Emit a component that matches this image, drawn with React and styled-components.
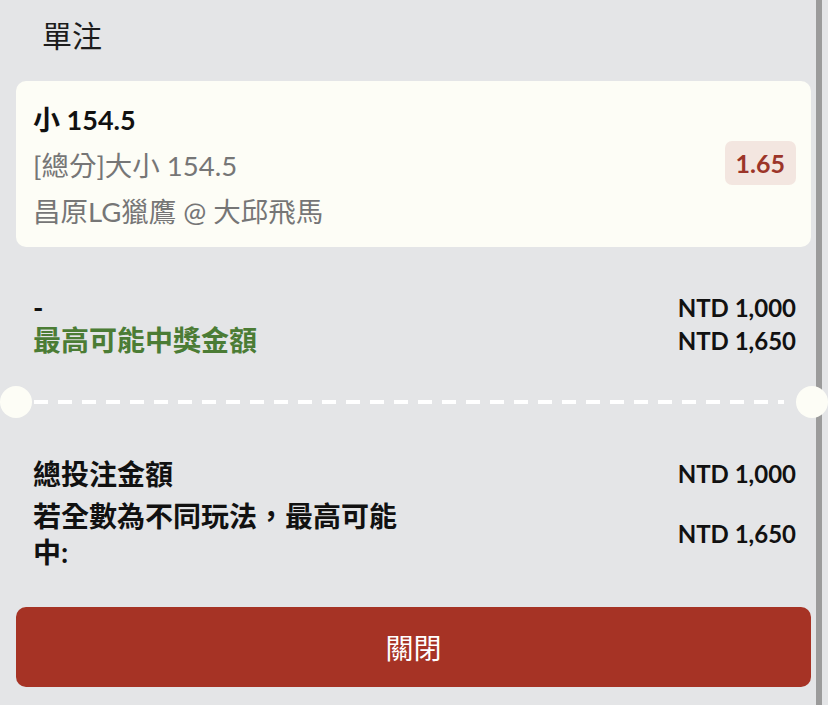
import React from 'react';
import styled, { createGlobalStyle } from 'styled-components';

const GlobalStyle = createGlobalStyle`
  html, body {
    margin: 0;
    padding: 0;
    background: #e4e5e7;
  }
  body {
    font-family: Lato, "Noto Sans CJK TC", "Noto Sans", sans-serif;
    color: #111;
  }
`;

const Page = styled.div`
  display: flex;
  width: 828px;
  height: 705px;
  overflow: hidden;
  background: #e4e5e7;
`;

const Main = styled.div`
  flex: 1;
  display: flex;
  flex-direction: column;
  padding: 0 5px 0 16px;
  position: relative;
`;

const Scrollbar = styled.div`
  width: 6px;
  margin-right: 6px;
  background: #9b9b9b;
`;

const Header = styled.h1`
  margin: 14px 0 0 26px;
  font-size: 30px;
  line-height: 42px;
  font-weight: 400;
  color: #1c1c1c;
`;

const BetCard = styled.div`
  margin-top: 25px;
  background: #fdfdf6;
  border-radius: 10px;
  padding: 16px 15px 12px 17px;
  display: flex;
  align-items: center;
  justify-content: space-between;
`;

const BetInfo = styled.div`
  display: flex;
  flex-direction: column;
`;

const BetLine = styled.div`
  font-size: ${p => (p.$strong ? '27px' : '27.5px')};
  line-height: 46px;
  font-weight: ${p => (p.$strong ? 700 : 400)};
  color: ${p => (p.$strong ? '#111' : '#767676')};
`;

const Odds = styled.span`
  background: #f3e6e0;
  color: #9c3529;
  font-weight: 700;
  font-size: 25px;
  line-height: 44px;
  padding: 0 11px;
  border-radius: 7px;
  margin-top: -6px;
`;

const Section = styled.div`
  display: flex;
  flex-direction: column;
  padding: 0 15px 0 17px;
  margin-top: ${p => p.$top}px;
  gap: ${p => p.$gap || 0}px;
`;

const Row = styled.div`
  display: flex;
  justify-content: space-between;
  align-items: center;
`;

const Label = styled.div`
  font-size: 28px;
  line-height: ${p => p.$lh || 36}px;
  font-weight: 700;
  max-width: 384px;
  color: ${p => (p.$green ? '#4b7c35' : '#111')};
`;

const Amount = styled.div`
  font-size: 24px;
  line-height: ${p => p.$lh || 36}px;
  font-weight: 700;
  color: #111;
  white-space: nowrap;
`;

const Divider = styled.div`
  position: relative;
  height: 32px;
  margin: 29px -5px 0 -16px;
  display: flex;
  align-items: center;
  padding: 0 32px 0 34px;
`;

const Dashes = styled.div`
  flex: 1;
  height: 4px;
  background: repeating-linear-gradient(
    to right,
    #ffffff 0,
    #ffffff 14px,
    transparent 14px,
    transparent 24px
  );
`;

const Notch = styled.div`
  position: absolute;
  top: 0;
  width: 32px;
  height: 32px;
  border-radius: 50%;
  background: #fdfdf6;
  z-index: 2;
  ${p => (p.$side === 'left' ? 'left: 0;' : 'right: -12px;')}
`;

const CloseButton = styled.button`
  margin-top: 37px;
  height: 80px;
  border: none;
  border-radius: 10px;
  background: #a63325;
  color: #fff;
  font-family: Lato, "Noto Sans CJK TC", sans-serif;
  font-size: 28px;
  font-weight: 400;
`;

export default function App() {
  return (
    <>
      <GlobalStyle />
      <Page>
        <Main>
          <Header>單注</Header>

          <BetCard>
            <BetInfo>
              <BetLine $strong>小 154.5</BetLine>
              <BetLine>[總分]大小 154.5</BetLine>
              <BetLine>昌原LG獵鷹 @ 大邱飛馬</BetLine>
            </BetInfo>
            <Odds>1.65</Odds>
          </BetCard>

          <Section $top={44}>
            <Row>
              <Label $lh={33}>-</Label>
              <Amount $lh={33}>NTD 1,000</Amount>
            </Row>
            <Row>
              <Label $lh={33} $green>最高可能中獎金額</Label>
              <Amount $lh={33}>NTD 1,650</Amount>
            </Row>
          </Section>

          <Divider>
            <Notch $side="left" />
            <Dashes />
            <Notch $side="right" />
          </Divider>

          <Section $top={38} $gap={6}>
            <Row>
              <Label>總投注金額</Label>
              <Amount>NTD 1,000</Amount>
            </Row>
            <Row>
              <Label>若全數為不同玩法，最高可能中:</Label>
              <Amount>NTD 1,650</Amount>
            </Row>
          </Section>

          <CloseButton>關閉</CloseButton>
        </Main>
        <Scrollbar />
      </Page>
    </>
  );
}
